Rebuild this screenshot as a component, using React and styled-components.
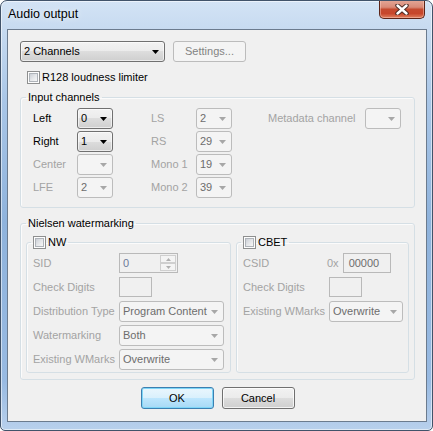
import React from 'react';
import styled, { createGlobalStyle } from 'styled-components';

const Global = createGlobalStyle`
  html, body { margin: 0; padding: 0; background: #ffffff; }
  body { font-family: "Liberation Sans", Arial, sans-serif; font-size: 11px; color: #000; }
  * { box-sizing: border-box; }
`;

const Window = styled.div`
  width: 433px;
  height: 431px;
  border: 1px solid #41536a;
  border-radius: 7px 7px 5px 5px;
  background: linear-gradient(180deg, #d3e3f5 0px, #c6daf0 30px, #a9c6e7 100px, #8fb3dc 220px, #98bae2 380px, #b8d0ec 100%);
  box-shadow: inset 0 0 0 1px rgba(255, 255, 255, 0.55);
  display: flex;
  flex-direction: column;
  overflow: hidden;
`;

const TitleBar = styled.div`
  height: 28px;
  flex: none;
  display: flex;
  justify-content: space-between;
  align-items: flex-start;
`;

const Title = styled.div`
  padding: 6px 0 0 7px;
  font-size: 12.5px;
  line-height: 15px;
  color: #000;
  text-shadow: 0 0 6px rgba(255, 255, 255, 0.9);
`;

const CloseButton = styled.div`
  width: 46px;
  height: 19px;
  margin: -1px 7px 0 0;
  border: 1px solid #5c2418;
  border-top: none;
  border-radius: 0 0 5px 5px;
  background: linear-gradient(180deg, #e4a898 0%, #d98a77 40%, #c54a2f 52%, #c7462b 75%, #e0805f 100%);
  box-shadow: inset 0 0 0 1px rgba(255, 210, 200, 0.45);
  display: flex;
  align-items: center;
  justify-content: center;
`;

const FrameBody = styled.div`
  flex: 1;
  display: flex;
  padding: 0 5px 8px 6px;
`;

const Client = styled.div`
  flex: 1;
  border: 1px solid #6b7b8e;
  background: #f0f0f0;
  padding: 11px 11px 0 12px;
  display: flex;
  flex-direction: column;
`;

const TopRow = styled.div`
  display: flex;
  gap: 8px;
  align-items: center;
`;

const ComboBox = styled.div`
  width: ${p => p.$w}px;
  height: ${p => p.$h || 21}px;
  flex: none;
  border: 1px solid ${p => (p.$disabled ? '#bcbcbc' : '#707070')};
  border-radius: 3px;
  background: ${p =>
    p.$disabled
      ? '#f4f4f4'
      : 'linear-gradient(180deg, #f2f2f2 0%, #ebebeb 50%, #dddddd 50%, #cfcfcf 100%)'};
  box-shadow: ${p => (p.$disabled ? 'none' : 'inset 0 0 0 1px rgba(255,255,255,0.6)')};
  display: flex;
  align-items: center;
  justify-content: space-between;
  padding: 0 5px 0 3px;
  color: ${p => (p.$disabled ? '#6d6d6d' : '#000')};
  line-height: 13px;
  white-space: nowrap;
`;

const PushButton = styled.div`
  width: 73px;
  height: ${p => p.$h || 21}px;
  flex: none;
  border: 1px solid ${p => (p.$default ? '#3c7fb1' : p.$disabled ? '#bcbcbc' : '#707070')};
  border-radius: 3px;
  background: ${p =>
    p.$default
      ? 'linear-gradient(180deg, #eaf6fd 0%, #d9f0fc 50%, #bee6fd 50%, #a7d9f5 100%)'
      : p.$disabled
      ? '#f4f4f4'
      : 'linear-gradient(180deg, #f2f2f2 0%, #ebebeb 50%, #dddddd 50%, #cfcfcf 100%)'};
  box-shadow: ${p =>
    p.$default
      ? 'inset 0 0 0 1px #7fd6f7'
      : p.$disabled
      ? 'none'
      : 'inset 0 0 0 1px rgba(255,255,255,0.75)'};
  color: ${p => (p.$disabled ? '#838383' : '#000')};
  display: flex;
  align-items: center;
  justify-content: center;
  line-height: 13px;
`;

const CheckRow = styled.div`
  display: flex;
  align-items: center;
  gap: 2px;
  margin: ${p => p.$m || '0'};
  line-height: 13px;
  color: #000;
`;

const CheckBox = styled.span`
  width: 13px;
  height: 13px;
  flex: none;
  border: 1px solid #8e8f8f;
  background: #fdfdfd;
  padding: 1px;
  display: inline-flex;
`;

const CheckInner = styled.span`
  width: 9px;
  height: 9px;
  border: 1px solid #aeb3b9;
  background: linear-gradient(135deg, #cbcfd5 0%, #e4e6e9 50%, #f7f7f7 100%);
`;

const Group = styled.fieldset`
  margin: ${p => p.$mt || 0}px 0 0 0;
  padding: 0;
  border: 1px solid #d5dfe5;
  border-radius: 3px;
  min-width: 0;
  width: ${p => (p.$w ? `${p.$w}px` : 'auto')};
  flex: none;
  box-shadow: inset 1px 1px 0 rgba(255, 255, 255, 0.7);
`;

const Legend = styled.legend`
  padding: 0 2px;
  margin-left: ${p => p.$ml ?? 5}px;
  line-height: 13px;
  font-size: 11px;
  color: #000;
`;

const ChannelGrid = styled.div`
  display: grid;
  grid-template-columns: 44px 74px 45px 72px 97px 36px;
  grid-auto-rows: 21px;
  row-gap: 2px;
  align-items: center;
  padding: 4px 0 9px 12px;
`;

const Label = styled.span`
  color: ${p => (p.$on ? '#000' : '#a3a3a3')};
  line-height: 13px;
  white-space: nowrap;
`;

const NielsenBody = styled.div`
  display: flex;
  gap: 5px;
  padding: 6px 5px 6px 5px;
`;

const FormGrid = styled.div`
  display: grid;
  grid-template-columns: 86px auto;
  grid-auto-rows: 21px;
  row-gap: 3px;
  align-items: center;
  padding: 4px 0 2px 6px;
`;

const EditBox = styled.div`
  width: ${p => p.$w}px;
  height: 20px;
  align-self: start;
  border: 1px solid #b9b9b9;
  background: #f0f0f0;
  color: #6d6d6d;
  display: flex;
  align-items: center;
  padding-left: ${p => p.$pl ?? 3}px;
  line-height: 13px;
`;

const SpinBox = styled.div`
  width: 59px;
  height: 20px;
  align-self: start;
  border: 1px solid #b9b9b9;
  background: #f0f0f0;
  display: flex;
  align-items: stretch;
`;

const SpinText = styled.div`
  flex: 1;
  display: flex;
  align-items: center;
  padding-left: 3px;
  color: #6d7a99;
`;

const SpinButtons = styled.div`
  width: 17px;
  display: flex;
  flex-direction: column;
  padding: 1px 1px 1px 0;
`;

const SpinHalf = styled.div`
  flex: 1;
  border: 1px solid #cfcfcf;
  background: #f4f4f4;
  display: flex;
  align-items: center;
  justify-content: center;
`;

const HexCell = styled.div`
  display: flex;
  align-items: flex-start;
  align-self: start;
  gap: 4px;
  margin-left: -2px;
`;

const HexPrefix = styled.span`
  color: #a3a3a3;
  line-height: 20px;
`;

const ButtonRow = styled.div`
  display: flex;
  justify-content: center;
  gap: 8px;
  margin-top: 7px;
`;

const Arrow = ({ disabled }) => (
  <svg width="7" height="4" viewBox="0 0 7 4">
    <polygon points="0,0 7,0 3.5,4" fill={disabled ? '#a7a7a7' : '#000'} />
  </svg>
);

const Combo = ({ w, value, disabled, h }) => (
  <ComboBox $w={w} $disabled={disabled} $h={h}>
    <span>{value}</span>
    <Arrow disabled={disabled} />
  </ComboBox>
);

const Check = ({ children, m }) => (
  <CheckRow $m={m}>
    <CheckBox>
      <CheckInner />
    </CheckBox>
    <span>{children}</span>
  </CheckRow>
);

const Tri = ({ up }) => (
  <svg width="5" height="3" viewBox="0 0 5 3">
    <polygon points={up ? '0,3 5,3 2.5,0' : '0,0 5,0 2.5,3'} fill="#b0b0b0" />
  </svg>
);

export default function App() {
  return (
    <>
      <Global />
      <Window>
        <TitleBar>
          <Title>Audio output</Title>
          <CloseButton>
            <svg width="14" height="11" viewBox="0 0 14 11">
              <path d="M2.5 1.5 L11.5 9.5 M11.5 1.5 L2.5 9.5" stroke="#4a2a24" strokeWidth="4.4" strokeLinecap="round" />
              <path d="M2.5 1.5 L11.5 9.5 M11.5 1.5 L2.5 9.5" stroke="#ffffff" strokeWidth="2.4" strokeLinecap="round" />
            </svg>
          </CloseButton>
        </TitleBar>
        <FrameBody>
          <Client>
            <TopRow>
              <Combo w={145} value="2 Channels" />
              <PushButton $disabled>Settings...</PushButton>
            </TopRow>
            <Check m="9px 0 0 7px">R128 loudness limiter</Check>

            <Group $mt={7}>
              <Legend>Input channels</Legend>
              <ChannelGrid>
                <Label $on>Left</Label>
                <Combo w={36} value="0" />
                <Label>LS</Label>
                <Combo w={36} value="2" disabled />
                <Label>Metadata channel</Label>
                <Combo w={36} value="" disabled />

                <Label $on>Right</Label>
                <Combo w={36} value="1" />
                <Label>RS</Label>
                <Combo w={36} value="29" disabled />
                <span />
                <span />

                <Label>Center</Label>
                <Combo w={36} value="" disabled />
                <Label>Mono 1</Label>
                <Combo w={36} value="19" disabled />
                <span />
                <span />

                <Label>LFE</Label>
                <Combo w={36} value="2" disabled />
                <Label>Mono 2</Label>
                <Combo w={36} value="39" disabled />
              </ChannelGrid>
            </Group>

            <Group $mt={9}>
              <Legend>Nielsen watermarking</Legend>
              <NielsenBody>
                <Group $w={205}>
                  <Legend $ml={4}>
                    <Check>NW</Check>
                  </Legend>
                  <FormGrid>
                    <Label>SID</Label>
                    <SpinBox>
                      <SpinText>0</SpinText>
                      <SpinButtons>
                        <SpinHalf><Tri up /></SpinHalf>
                        <SpinHalf><Tri /></SpinHalf>
                      </SpinButtons>
                    </SpinBox>
                    <Label>Check Digits</Label>
                    <EditBox $w={33} />
                    <Label>Distribution Type</Label>
                    <Combo w={105} value="Program Content" disabled />
                    <Label>Watermarking</Label>
                    <Combo w={105} value="Both" disabled />
                    <Label>Existing WMarks</Label>
                    <Combo w={105} value="Overwrite" disabled />
                  </FormGrid>
                </Group>
                <Group $w={173}>
                  <Legend $ml={4}>
                    <Check>CBET</Check>
                  </Legend>
                  <FormGrid>
                    <Label>CSID</Label>
                    <HexCell>
                      <HexPrefix>0x</HexPrefix>
                      <EditBox $w={48} $pl={5}>00000</EditBox>
                    </HexCell>
                    <Label>Check Digits</Label>
                    <EditBox $w={33} />
                    <Label>Existing WMarks</Label>
                    <Combo w={74} value="Overwrite" disabled />
                  </FormGrid>
                </Group>
              </NielsenBody>
            </Group>

            <ButtonRow>
              <PushButton $default $h={22}>OK</PushButton>
              <PushButton $h={22}>Cancel</PushButton>
            </ButtonRow>
          </Client>
        </FrameBody>
      </Window>
    </>
  );
}
